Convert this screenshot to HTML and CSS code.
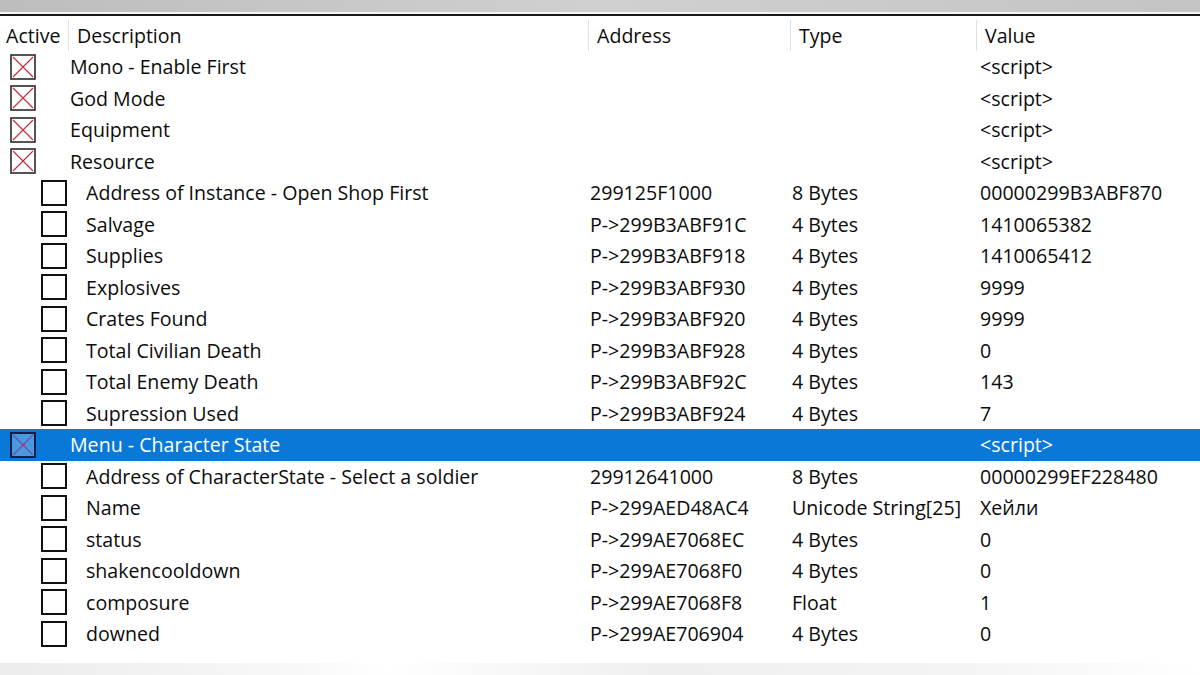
FILE: index.html
```html
<!DOCTYPE html>
<html lang="en">
<head>
  <meta charset="UTF-8">
  <meta name="viewport" content="width=device-width, initial-scale=1.0">
  <title>Cheat Table</title>
  <link rel="stylesheet" href="styles.css">
</head>
<body>
  <div class="window">
    <div class="titlebar"></div>
    <div class="table">
      <div class="table-head">
        <div class="th th-active">Active</div>
        <div class="th">Description</div>
        <div class="th">Address</div>
        <div class="th">Type</div>
        <div class="th">Value</div>
      </div>

      <!-- scripts -->
      <div class="row">
        <div class="cell desc"><span class="box checked"><svg viewBox="0 0 26 26"><rect x="1" y="1" width="24" height="24"/><path d="M3 3 L23 23 M23 3 L3 23"/></svg></span><span class="name">Mono - Enable First</span></div>
        <div class="cell"></div><div class="cell"></div><div class="cell val">&lt;script&gt;</div>
      </div>
      <div class="row">
        <div class="cell desc"><span class="box checked"><svg viewBox="0 0 26 26"><rect x="1" y="1" width="24" height="24"/><path d="M3 3 L23 23 M23 3 L3 23"/></svg></span><span class="name">God Mode</span></div>
        <div class="cell"></div><div class="cell"></div><div class="cell val">&lt;script&gt;</div>
      </div>
      <div class="row">
        <div class="cell desc"><span class="box checked"><svg viewBox="0 0 26 26"><rect x="1" y="1" width="24" height="24"/><path d="M3 3 L23 23 M23 3 L3 23"/></svg></span><span class="name">Equipment</span></div>
        <div class="cell"></div><div class="cell"></div><div class="cell val">&lt;script&gt;</div>
      </div>
      <div class="row">
        <div class="cell desc"><span class="box checked"><svg viewBox="0 0 26 26"><rect x="1" y="1" width="24" height="24"/><path d="M3 3 L23 23 M23 3 L3 23"/></svg></span><span class="name">Resource</span></div>
        <div class="cell"></div><div class="cell"></div><div class="cell val">&lt;script&gt;</div>
      </div>

      <!-- resource entries -->
      <div class="row child">
        <div class="cell desc"><span class="box"></span><span class="name">Address of Instance - Open Shop First</span></div>
        <div class="cell">299125F1000</div><div class="cell">8 Bytes</div><div class="cell val">00000299B3ABF870</div>
      </div>
      <div class="row child">
        <div class="cell desc"><span class="box"></span><span class="name">Salvage</span></div>
        <div class="cell">P-&gt;299B3ABF91C</div><div class="cell">4 Bytes</div><div class="cell val">1410065382</div>
      </div>
      <div class="row child">
        <div class="cell desc"><span class="box"></span><span class="name">Supplies</span></div>
        <div class="cell">P-&gt;299B3ABF918</div><div class="cell">4 Bytes</div><div class="cell val">1410065412</div>
      </div>
      <div class="row child">
        <div class="cell desc"><span class="box"></span><span class="name">Explosives</span></div>
        <div class="cell">P-&gt;299B3ABF930</div><div class="cell">4 Bytes</div><div class="cell val">9999</div>
      </div>
      <div class="row child">
        <div class="cell desc"><span class="box"></span><span class="name">Crates Found</span></div>
        <div class="cell">P-&gt;299B3ABF920</div><div class="cell">4 Bytes</div><div class="cell val">9999</div>
      </div>
      <div class="row child">
        <div class="cell desc"><span class="box"></span><span class="name">Total Civilian Death</span></div>
        <div class="cell">P-&gt;299B3ABF928</div><div class="cell">4 Bytes</div><div class="cell val">0</div>
      </div>
      <div class="row child">
        <div class="cell desc"><span class="box"></span><span class="name">Total Enemy Death</span></div>
        <div class="cell">P-&gt;299B3ABF92C</div><div class="cell">4 Bytes</div><div class="cell val">143</div>
      </div>
      <div class="row child">
        <div class="cell desc"><span class="box"></span><span class="name">Supression Used</span></div>
        <div class="cell">P-&gt;299B3ABF924</div><div class="cell">4 Bytes</div><div class="cell val">7</div>
      </div>

      <!-- selected script -->
      <div class="row selected">
        <div class="cell desc"><span class="box checked"><svg viewBox="0 0 26 26"><rect x="1" y="1" width="24" height="24"/><path d="M3 3 L23 23 M23 3 L3 23"/><circle cx="13" cy="13" r="1.6"/></svg></span><span class="name">Menu - Character State</span></div>
        <div class="cell"></div><div class="cell"></div><div class="cell val">&lt;script&gt;</div>
      </div>

      <!-- character entries -->
      <div class="row child">
        <div class="cell desc"><span class="box"></span><span class="name">Address of CharacterState - Select a soldier</span></div>
        <div class="cell">29912641000</div><div class="cell">8 Bytes</div><div class="cell val">00000299EF228480</div>
      </div>
      <div class="row child">
        <div class="cell desc"><span class="box"></span><span class="name">Name</span></div>
        <div class="cell">P-&gt;299AED48AC4</div><div class="cell">Unicode String[25]</div><div class="cell val">Хейли</div>
      </div>
      <div class="row child">
        <div class="cell desc"><span class="box"></span><span class="name">status</span></div>
        <div class="cell">P-&gt;299AE7068EC</div><div class="cell">4 Bytes</div><div class="cell val">0</div>
      </div>
      <div class="row child">
        <div class="cell desc"><span class="box"></span><span class="name">shakencooldown</span></div>
        <div class="cell">P-&gt;299AE7068F0</div><div class="cell">4 Bytes</div><div class="cell val">0</div>
      </div>
      <div class="row child">
        <div class="cell desc"><span class="box"></span><span class="name">composure</span></div>
        <div class="cell">P-&gt;299AE7068F8</div><div class="cell">Float</div><div class="cell val">1</div>
      </div>
      <div class="row child">
        <div class="cell desc"><span class="box"></span><span class="name">downed</span></div>
        <div class="cell">P-&gt;299AE706904</div><div class="cell">4 Bytes</div><div class="cell val">0</div>
      </div>
    </div>
    <div class="footer"></div>
  </div>
</body>
</html>
```

FILE: styles.css
```css
html, body {
  margin: 0;
  padding: 0;
  width: 1200px;
  height: 675px;
  overflow: hidden;
  background: #fff;
}
.window {
  display: flex;
  flex-direction: column;
  height: 675px;
  font-family: "Open Sans", "Noto Sans", sans-serif;
  font-size: 19.6px;
  color: #0c0c0c;
}
.titlebar {
  height: 12px;
  background: linear-gradient(to right, #bdbdbd, #d0d0d0 50%, #c4c4c4);
  border-bottom: 1px solid #f4f4f4;
  box-shadow: 0 1px 0 #f4f4f4, 0 3px 0 #1a1a1a;
  margin-bottom: 3px;
}
.table {
  flex: 1;
  display: flex;
  flex-direction: column;
}
.table-head {
  display: grid;
  grid-template-columns: 68px 520px 202px 186px 1fr;
  height: 35px;
  align-items: end;
}
.th {
  height: 31px;
  display: flex;
  align-items: center;
  padding: 0 0 0 8px;
  box-sizing: border-box;
  border-left: 1px solid #e0e0e0;
}
.th-active {
  border-left: none;
  padding-left: 6px;
}
.row {
  display: grid;
  grid-template-columns: 588px 202px 186px 1fr;
  height: 31.5px;
  align-items: center;
  white-space: nowrap;
}
.cell {
  padding-left: 2px;
}
.cell.val {
  padding-left: 4px;
}
.desc {
  display: flex;
  align-items: center;
  padding-left: 10px;
}
.desc .name {
  margin-left: 34px;
}
.row.child .desc {
  padding-left: 41px;
}
.row.child .desc .name {
  margin-left: 19px;
}
.box {
  display: inline-block;
  width: 26px;
  height: 26px;
  box-sizing: border-box;
  border: 2px solid #111;
  background: #fff;
  flex: none;
}
.box.checked {
  border: none;
  background: none;
}
.box svg {
  display: block;
  width: 26px;
  height: 26px;
}
.box svg rect {
  fill: #fff;
  stroke: #2a2a2a;
  stroke-width: 1.6;
}
.box svg path {
  stroke: #c3273a;
  stroke-width: 1.1;
  fill: none;
}
.row.selected {
  background: #0a78d7;
  color: #fff;
}
.row.selected .box svg rect {
  fill: #4c97e2;
  stroke: #10204a;
  stroke-width: 2;
}
.row.selected .box svg path {
  stroke: #5a5aa8;
}
.row.selected .box svg circle {
  fill: #d8246a;
}
.footer {
  height: 12px;
  background: linear-gradient(to right, #ececec, #f8f8f8 25%, #fff 32%, #efefef 55%, #f4f4f4 80%, #fff);
}
```
